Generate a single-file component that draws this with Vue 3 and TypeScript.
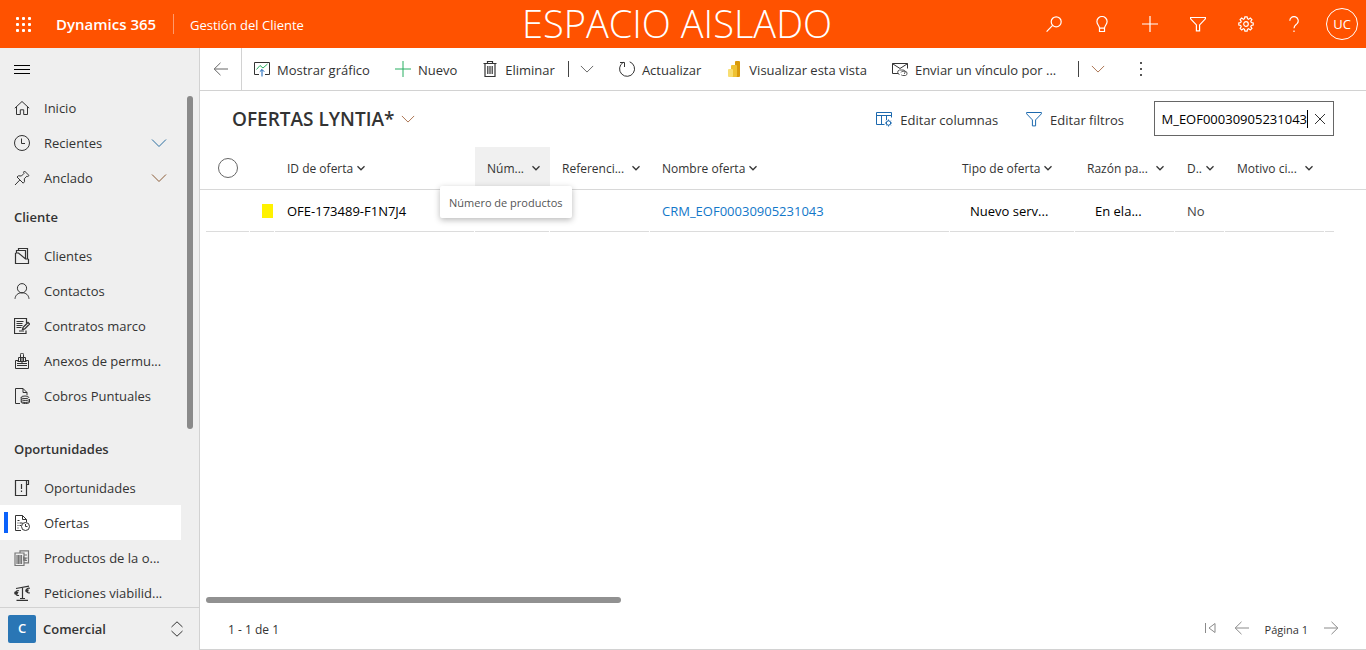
<script setup lang="ts">
import { ref } from 'vue'

interface NavItem {
  label: string
  icon: string
  expandable?: boolean
  active?: boolean
}

interface NavGroup {
  title?: string
  items: NavItem[]
}

interface Column {
  key: string
  label: string
  hovered?: boolean
}

const icons: Record<string, string> = {
  search: '<circle cx="10.2" cy="5.8" r="5"/><path d="M6.6 9.4L.6 15.6"/>',
  bulb: '<path d="M5.5 12.2c0-2.6-2.6-3.4-2.6-6.6a5.1 5.1 0 0 1 10.2 0c0 3.2-2.6 4-2.6 6.6zM5.5 12.2v3.3h5v-3.3"/>',
  plus: '<path d="M8 0v16M0 8h16"/>',
  filter: '<path d="M.6 1.5h14.8v1.3L9.6 8.900v6H6.400v-6L.6 2.800z"/>',
  gear: '<path d="M6.900.8h2.200l.4 1.900 1.100.5 1.700-1.100 1.600 1.600-1.100 1.700.5 1.100 1.900.4v2.200l-1.900.4-.5 1.100 1.100 1.700-1.600 1.600-1.700-1.100-1.100.5-.4 1.900H6.900l-.4-1.900-1.100-.5-1.700 1.100-1.600-1.600 1.100-1.700-.5-1.100-1.900-.4V6.900l1.900-.4.5-1.100-1.100-1.700 1.600-1.600 1.700 1.100 1.100-.5z"/><circle cx="8" cy="8" r="2.300"/>',
  help: '<path d="M3.800 4.700a4.200 4.200 0 1 1 7.300 2.900C9.300 9.200 8 9.900 8 12.300M8 14.500v1.500"/>',
  back: '<path d="M15 8H1.200M7.500 1.800L1.200 8l6.300 6.200"/>',
  forward: '<path d="M1 8h13.800M8.500 1.800L14.800 8l-6.300 6.200"/>',
  first: '<path d="M2.500 3v10M12 3.500v9L6 8z"/>',
  menu: '<path d="M0 4.500h16M0 8.500h16M0 12.500h16"/>',
  chart: '<path d="M5 13.500H.5V1.500h15v12H11"/><path d="M2.500 8.500l3.500-4 3 2.500L13.500 3" stroke="#27ae60"/><path d="M8 15.500V8.500M5.800 10.700L8 8.500l2.200 2.200" stroke="#1160b7"/>',
  trash: '<path d="M1.500 2.500h13M5.500 2.500v-2h5v2M3 2.500v13h10v-13M5.800 5v8M8 5v8M10.200 5v8" stroke-width="1.200"/>',
  refresh: '<path d="M10.700.8a7.500 7.500 0 1 1-6.500.6"/><path d="M1 1.500h4.500V6"/>',
  mail: '<path d="M6.500 12.500H.5v-10h15v5M.5 2.700L8 7.500l7.500-4.800"/><path d="M7.500 13.500a2.300 2.300 0 0 1 0-4.500h3.500a2 2 0 0 1 1 3.800M9 11.500a2.200 2.200 0 0 1 2-1.300h2a2.200 2.200 0 0 1 .5 4.300H10.500a2.200 2.200 0 0 1-1.300-.8" stroke="#555"/>',
  columns: '<path d="M.5 13.500v-12h15v5M.5 4.500h15M.5 13.500h8M5.500 4.500v9M10.500 4.500v4.500"/><circle cx="12.5" cy="12" r="2.200"/><path d="M12.500 8.500v1.300M12.500 14.200v1.300M9 12h1.300M14.700 12H16M10.200 9.700l.8.800M14 13.500l.8.800M14.800 9.700l-.8.800M11 13.500l-.8.800"/>',
  close: '<path d="M3 3l10 10M13 3L3 13"/>',
  home: '<path d="M.8 8.200L8 1.500l7.200 6.700M2.500 6.800v7.700h3.800V9.800h3.400v4.700h3.800V6.800"/>',
  clock: '<circle cx="8" cy="8" r="7.500"/><path d="M7.500 3.500v5H11"/>',
  pin: '<path d="M10.500 1l4.500 4.500-1.200 1-1-.3-2.500 2.600.2 2.900-1.300 1.500L3 7l1.500-1.200 2.900.2L10 3.400l-.4-1.200zM5.800 10L1 15"/>',
  folder: '<path d="M1.500 5V15.500h13V11M1.500 5h3l7 6h3M2.500 5V2.500h9V11M4.500 2.500V.5h9V11" stroke-width="1.200"/>',
  person: '<circle cx="8" cy="5.200" r="4.600"/><path d="M1 15.800c.4-3.800 3-6 7-6s6.600 2.200 7 6"/>',
  contract: '<path d="M12.500 5V.5h-12v15h11.500v-3" stroke-width="1.200"/><path d="M2.500 3.500h7M2.500 5.500h6M2.500 7.500h6M2.500 9.500h5M5 13h5" stroke-width="1.200"/><path d="M8.500 11.500l.6-2.200L14 4.500l1.600 1.500-4.900 4.900z" stroke-width="1.300"/>',
  annex: '<path d="M6.500 9V1.500a1.500 1.500 0 0 1 3 0V9M4.500 9V4.500h7V9M8 4v6M1.500 7.500v8h13v-8h-3M1.500 7.500h3M3 10.500h10M3 12.500h10M3.500 8.500h9" stroke-width="1"/>',
  invoice: '<path d="M6 15.500H1.500V.5h7.500l4 4V7M9 .5v4h4"/><ellipse cx="11" cy="9.300" rx="3.800" ry="1.300"/><path d="M7.200 9.300v4.800c0 .8 1.700 1.400 4.300 1.400s4-.6 4-1.400V11M7.200 11.500c1 1.300 7 1.300 8.300 0M7.200 13.500c1 1.300 7 1.300 8.300 0"/>',
  opportunity: '<path d="M1.500 .5h13v4h-2v11h-11zM12.500 4.500v-4M7.500 4v5M7.500 10.500V12" stroke-width="1.200"/>',
  quote: '<path d="M7 15.500H1.500V.5h7l4 4V7M8.500 .5v4h4M3.500 5.500h2M3.500 8h1M5.500 8h3M3.500 10.500h1M5.500 10.500h1.500M3.500 13h1"/><circle cx="11.500" cy="11.500" r="4"/><path d="M11.500 9v2.500h2"/>',
  products: '<path d="M1 3h9v12.500H1zM3 5v9M4.500 5v9M6 5v9M7.500 5v9M6 3V.8h8.500v12H10M10 5h3M11 8h2.500M10 10.500h3" stroke="#777" stroke-width="1.200"/><path d="M9 6l4 3-4 2z" fill="#777" stroke="none"/>',
  scales: '<path d="M8.500 2.500v11M6 13.500h5M2.500 15.300h11.500M2 3.500l13-2.300M5 5.700a2.500 2.500 0 1 0 0 4.600M.3 7.300h4M.3 8.700h3.500M15.800 3.400a2.400 2.400 0 1 0 0 4.300M11.300 5h3.500M11.300 6.200h3" stroke-width="1.200"/>',
  chevron: '<path d="M1 4.500l7 7 7-7"/>',
  updown: '<path d="M2.500 6L8 .8 13.500 6M2.500 10L8 15.200 13.500 10"/>',
}

const groups: NavGroup[] = [
  {
    items: [
      { label: 'Inicio', icon: 'home' },
      { label: 'Recientes', icon: 'clock', expandable: true },
      { label: 'Anclado', icon: 'pin', expandable: true },
    ],
  },
  {
    title: 'Cliente',
    items: [
      { label: 'Clientes', icon: 'folder' },
      { label: 'Contactos', icon: 'person' },
      { label: 'Contratos marco', icon: 'contract' },
      { label: 'Anexos de permu...', icon: 'annex' },
      { label: 'Cobros Puntuales', icon: 'invoice' },
    ],
  },
  {
    title: 'Oportunidades',
    items: [
      { label: 'Oportunidades', icon: 'opportunity' },
      { label: 'Ofertas', icon: 'quote', active: true },
      { label: 'Productos de la o...', icon: 'products' },
      { label: 'Peticiones viabilid...', icon: 'scales' },
    ],
  },
]

const headerActions = [
  { icon: 'search', label: 'Buscar' },
  { icon: 'bulb', label: 'Asistente' },
  { icon: 'plus', label: 'Crear' },
  { icon: 'filter', label: 'Filtrar' },
  { icon: 'gear', label: 'Configuración' },
  { icon: 'help', label: 'Ayuda' },
]

const columns: Column[] = [
  { key: 'id', label: 'ID de oferta' },
  { key: 'num', label: 'Núm...', hovered: true },
  { key: 'ref', label: 'Referenci...' },
  { key: 'name', label: 'Nombre oferta' },
  { key: 'type', label: 'Tipo de oferta' },
  { key: 'reason', label: 'Razón pa...' },
  { key: 'd', label: 'D..' },
  { key: 'motive', label: 'Motivo ci...' },
]

const query = ref('M_EOF00030905231043')
const allSelected = ref(false)
</script>

<template>
  <div class="app">
    <header class="topbar">
      <button class="waffle" aria-label="Iniciador de aplicaciones">
        <i v-for="n in 9" :key="n"></i>
      </button>
      <a class="brand" href="#">Dynamics 365</a>
      <span class="module">Gestión del Cliente</span>
      <span class="environment">ESPACIO AISLADO</span>
      <nav class="top-actions">
        <button v-for="a in headerActions" :key="a.icon" :aria-label="a.label">
          <svg class="icon" viewBox="0 0 16 16" v-html="icons[a.icon]"></svg>
        </button>
      </nav>
      <button class="avatar" aria-label="Cuenta">UC</button>
    </header>

    <div class="body">
      <aside class="sidebar">
        <button class="hamburger" aria-label="Menú">
          <svg class="icon" viewBox="0 0 16 16" v-html="icons.menu"></svg>
        </button>
        <nav class="site-map">
          <section v-for="(g, gi) in groups" :key="gi" class="group">
            <h2 v-if="g.title">{{ g.title }}</h2>
            <a v-for="item in g.items" :key="item.label" href="#" class="nav-item" :class="{ active: item.active }">
              <svg class="icon" viewBox="0 0 16 16" v-html="icons[item.icon]"></svg>
              <span>{{ item.label }}</span>
              <svg v-if="item.expandable" class="icon expand" viewBox="0 0 16 16" v-html="icons.chevron"></svg>
            </a>
          </section>
        </nav>
        <div class="side-thumb"></div>
        <button class="area">
          <span class="area-badge">C</span>
          <span class="area-name">Comercial</span>
          <svg class="icon" viewBox="0 0 16 16" v-html="icons.updown"></svg>
        </button>
      </aside>

      <main class="content">
        <div class="commands">
          <button class="back" aria-label="Atrás">
            <svg class="icon" viewBox="0 0 16 16" v-html="icons.back"></svg>
          </button>
          <button class="command">
            <svg class="icon" viewBox="0 0 16 16" v-html="icons.chart"></svg>Mostrar gráfico
          </button>
          <button class="command green">
            <svg class="icon" viewBox="0 0 16 16" v-html="icons.plus"></svg>Nuevo
          </button>
          <button class="command">
            <svg class="icon" viewBox="0 0 16 16" v-html="icons.trash"></svg>Eliminar
          </button>
          <button class="split-arrow" aria-label="Más opciones de eliminar">
            <svg class="icon" viewBox="0 0 16 16" v-html="icons.chevron"></svg>
          </button>
          <button class="command">
            <svg class="icon" viewBox="0 0 16 16" v-html="icons.refresh"></svg>Actualizar
          </button>
          <button class="command">
            <svg class="icon" viewBox="0 0 16 16">
              <rect x="9" y="0" width="5" height="16" rx="1" fill="#d99a0b" stroke="none" />
              <rect x="5" y="4" width="6" height="12" rx="1" fill="#efc234" stroke="none" />
              <rect x="2" y="8" width="5" height="8" rx="1" fill="#f8de73" stroke="none" />
            </svg>Visualizar esta vista
          </button>
          <button class="command wide">
            <svg class="icon" viewBox="0 0 16 16" v-html="icons.mail"></svg>Enviar un vínculo por ...
          </button>
          <button class="split-arrow warm" aria-label="Más opciones de envío">
            <svg class="icon" viewBox="0 0 16 16" v-html="icons.chevron"></svg>
          </button>
          <button class="more" aria-label="Más comandos"><i></i><i></i><i></i></button>
        </div>

        <div class="view-bar">
          <button class="view-name">
            <h1>OFERTAS LYNTIA*</h1>
            <svg class="icon" viewBox="0 0 16 16" v-html="icons.chevron"></svg>
          </button>
          <div class="view-tools">
            <button class="tool">
              <svg class="icon" viewBox="0 0 16 16" v-html="icons.columns"></svg>Editar columnas
            </button>
            <button class="tool">
              <svg class="icon" viewBox="0 0 16 16" v-html="icons.filter"></svg>Editar filtros
            </button>
            <div class="search">
              <input v-model="query" type="text" aria-label="Buscar en esta vista" />
              <span class="caret"></span>
              <button aria-label="Borrar búsqueda">
                <svg class="icon" viewBox="0 0 16 16" v-html="icons.close"></svg>
              </button>
            </div>
          </div>
        </div>

        <div class="grid">
          <table>
            <colgroup>
              <col class="w-check" /><col class="w-flag" /><col class="w-id" /><col class="w-num" />
              <col class="w-ref" /><col class="w-name" /><col class="w-type" /><col class="w-ref" />
              <col class="w-d" /><col class="w-ref" /><col />
            </colgroup>
            <thead>
              <tr>
                <th class="check"><input v-model="allSelected" type="checkbox" aria-label="Seleccionar todo" /></th>
                <th></th>
                <th v-for="c in columns" :key="c.key" :class="[c.key, { hovered: c.hovered }]">
                  <button class="col-head">
                    <span>{{ c.label }}</span>
                    <svg class="icon" viewBox="0 0 16 16" v-html="icons.chevron"></svg>
                  </button>
                  <div v-if="c.hovered" class="tooltip" role="tooltip">Número de productos</div>
                </th>
                <th></th>
              </tr>
            </thead>
            <tbody>
              <tr>
                <td class="first"></td>
                <td><span class="flag"></span></td>
                <td>OFE-173489-F1N7J4</td>
                <td></td>
                <td></td>
                <td><a href="#">CRM_EOF00030905231043</a></td>
                <td class="option">Nuevo serv...</td>
                <td class="option">En ela...</td>
                <td class="muted">No</td>
                <td></td>
                <td class="last"></td>
              </tr>
            </tbody>
          </table>
        </div>

        <div class="h-scroll"><div class="h-thumb"></div></div>
        <footer class="pager">
          <span class="count">1 - 1 de 1</span>
          <button aria-label="Primera página"><svg class="icon" viewBox="0 0 16 16" v-html="icons.first"></svg></button>
          <button aria-label="Página anterior"><svg class="icon" viewBox="0 0 16 16" v-html="icons.back"></svg></button>
          <span class="page">Página 1</span>
          <button aria-label="Página siguiente"><svg class="icon" viewBox="0 0 16 16" v-html="icons.forward"></svg></button>
        </footer>
      </main>
    </div>
  </div>
</template>

<style>
body {
  margin: 0;
  overflow: hidden;
}
</style>

<style scoped>
.app {
  height: 100vh;
  display: flex;
  flex-direction: column;
  font-family: 'Open Sans', 'Noto Sans', sans-serif;
  font-size: 13px;
  line-height: 20px;
  color: #333;
  background: #fff;
}
.app *,
.app *::before {
  box-sizing: border-box;
}
button {
  font: inherit;
  color: inherit;
  background: none;
  border: 0;
  padding: 0;
  margin: 0;
  display: flex;
  align-items: center;
  white-space: nowrap;
  flex: none;
}
a {
  color: inherit;
  text-decoration: none;
}
.icon {
  width: 16px;
  height: 16px;
  flex: none;
  fill: none;
  stroke: currentColor;
  stroke-width: 1;
}

/* Top bar */
.topbar {
  height: 48px;
  flex: none;
  display: flex;
  align-items: center;
  position: relative;
  background: #ff5200;
  color: #fff;
}
.waffle {
  display: grid;
  grid-template-columns: repeat(3, 3px);
  gap: 3px;
  margin-left: 16px;
}
.waffle i {
  width: 3px;
  height: 3px;
  background: #fff;
  border-radius: 1px;
}
.brand {
  width: 117px;
  margin-left: 25px;
  font-size: 15px;
  font-weight: 600;
  white-space: nowrap;
}
.module {
  height: 20px;
  line-height: 22px;
  padding-left: 16px;
  border-left: 1px solid #ff9a6b;
}
.environment {
  position: absolute;
  left: 0;
  right: 12px;
  top: 0;
  line-height: 46px;
  text-align: center;
  font-size: 38px;
  font-weight: 300;
  pointer-events: none;
}
.top-actions {
  display: flex;
  gap: 32px;
  margin-left: auto;
  margin-right: 24px;
}
.top-actions .icon {
  stroke-width: 1.2;
}
.avatar {
  width: 32px;
  height: 32px;
  justify-content: center;
  margin-right: 8px;
  border: 1px solid #fff;
  border-radius: 50%;
}

/* Sidebar */
.body {
  flex: 1;
  min-height: 0;
  display: flex;
}
.sidebar {
  width: 200px;
  flex: none;
  display: flex;
  flex-direction: column;
  position: relative;
  background: #efefef;
  border-right: 1px solid #d2d2d2;
}
.hamburger {
  height: 42px;
  padding-left: 14px;
  color: #000;
}
.site-map {
  flex: 1;
  min-height: 0;
  overflow: hidden;
}
.group h2 {
  margin: 0;
  padding-left: 14px;
  font-size: 13px;
  font-weight: 600;
  line-height: 42px;
}
.group:nth-child(2) {
  padding-top: 1px;
}
.group:nth-child(3) {
  padding-top: 15px;
}
.nav-item {
  display: flex;
  align-items: center;
  position: relative;
  width: 181px;
  height: 35px;
  padding: 0 14px;
  gap: 14px;
}
.nav-item.active {
  background: #fff;
}
.nav-item.active::before {
  content: '';
  position: absolute;
  left: 4px;
  top: 7px;
  width: 4px;
  height: 21px;
  background: #0b62fb;
}
.expand {
  margin-left: auto;
  color: #2b6ea0;
}
.nav-item:nth-child(3) .expand {
  color: #8a5a35;
}
.side-thumb {
  position: absolute;
  top: 48px;
  right: 6px;
  width: 6px;
  height: 333px;
  border-radius: 3px;
  background: #8a8a8a;
}
.area {
  height: 43px;
  padding: 0 14px 0 8px;
  border-top: 1px solid #d2d2d2;
}
.area-badge {
  width: 28px;
  height: 28px;
  line-height: 26px;
  border-radius: 2px;
  background: #2a76b5;
  color: #fff;
  font-weight: 600;
}
.area-name {
  flex: 1;
  margin-left: 7px;
  text-align: left;
  font-weight: 600;
}

/* Commands */
.content {
  flex: 1;
  min-width: 0;
  display: flex;
  flex-direction: column;
  border-bottom: 1px solid #d2d2d2;
}
.commands {
  height: 43px;
  flex: none;
  display: flex;
  border-bottom: 1px solid #d2d2d2;
}
.back {
  width: 42px;
  justify-content: center;
  border-right: 1px solid #d2d2d2;
  color: #666;
}
.command {
  padding: 2px 13px 0 12px;
  gap: 7px;
}
.command.wide {
  padding-right: 22px;
}
.command .icon,
.tool .icon {
  margin-bottom: 2px;
}
.green .icon {
  color: #27ae60;
}
.split-arrow {
  width: 39px;
  justify-content: center;
  position: relative;
  color: #555;
}
.split-arrow::before {
  content: '';
  position: absolute;
  left: 0;
  top: 13px;
  width: 1px;
  height: 16px;
  background: #444;
}
.split-arrow .icon,
.view-name .icon {
  width: 14px;
  height: 14px;
}
.warm,
.view-name .icon {
  color: #a0623c;
}
.more {
  flex-direction: column;
  justify-content: center;
  gap: 4px;
  margin-left: 23px;
}
.more i {
  width: 2px;
  height: 2px;
  background: #555;
}

/* View header */
.view-bar {
  flex: none;
  display: flex;
  align-items: center;
  justify-content: space-between;
  height: 56px;
  padding: 0 32px 1px;
}
.view-name {
  gap: 7px;
}
.view-name h1 {
  margin: 0;
  font-size: 19px;
  font-weight: 600;
  line-height: 24px;
}
.view-tools {
  display: flex;
  align-items: center;
  gap: 28px;
}
.tool {
  gap: 8px;
  padding-top: 2px;
}
.tool .icon {
  color: #1c69ae;
}
.search {
  width: 180px;
  height: 35px;
  display: flex;
  align-items: center;
  margin-left: 2px;
  border: 1px solid #666;
}
.search input {
  flex: 1;
  min-width: 0;
  padding: 0;
  border: 0;
  outline: 0;
  background: none;
  font: inherit;
  color: #000;
  text-align: right;
}
.caret {
  width: 1px;
  height: 18px;
  background: #000;
}
.search button {
  margin: 0 5px 0 4px;
}

/* Grid */
.grid {
  flex: 1;
  min-height: 0;
}
table {
  width: 100%;
  table-layout: fixed;
  border-collapse: separate;
  border-spacing: 0;
}
.w-check { width: 50px; }
.w-flag { width: 25px; }
.w-id { width: 200px; }
.w-num { width: 75px; }
.w-ref { width: 100px; }
.w-name { width: 300px; }
.w-type { width: 125px; }
.w-d { width: 50px; }
th {
  height: 43px;
  padding: 0 0 0 12px;
  position: relative;
  border-bottom: 1px solid #d8d8d8;
  font-size: 12px;
  font-weight: 500;
}
th.check {
  padding: 0 0 0 18px;
}
.check input {
  appearance: none;
  display: block;
  width: 20px;
  height: 20px;
  margin: 0;
  border: 1px solid #666;
  border-radius: 50%;
}
.hovered {
  background: #f0f0f0;
}
.col-head {
  gap: 4px;
  padding-top: 2px;
}
.col-head .icon {
  width: 8px;
  height: 8px;
  margin-bottom: 2px;
  stroke-width: 2.5;
}
.num .col-head,
.ref .col-head,
.reason .col-head,
.motive .col-head {
  gap: 8px;
}
.tooltip {
  position: absolute;
  z-index: 1;
  top: 39px;
  left: -35px;
  padding: 7px 9px 5px;
  background: #fff;
  border-radius: 2px;
  box-shadow: 0 2px 6px rgba(0, 0, 0, 0.28);
  font-size: 11px;
  font-weight: 400;
  color: #555;
  white-space: nowrap;
}
td {
  height: 42px;
  padding: 0 0 0 12px;
  color: #000;
  white-space: nowrap;
  background: linear-gradient(#dcdcdc, #dcdcdc) no-repeat left bottom / calc(100% - 1px) 1px;
}
td a {
  color: #1277c9;
}
td.first {
  background-position: right 1px bottom;
  background-size: calc(100% - 7px) 1px;
}
td.last {
  background-size: calc(100% - 32px) 1px;
}
td.option {
  padding-left: 20px;
}
td.muted {
  color: #444;
}
.flag {
  display: block;
  width: 11px;
  height: 14px;
  background: #fff200;
}

/* Footer */
.h-scroll {
  flex: none;
  padding: 0 32px 0 6px;
}
.h-thumb {
  width: 415px;
  height: 6px;
  border-radius: 3px;
  background: #919191;
}
.pager {
  flex: none;
  display: flex;
  align-items: center;
  height: 46px;
  padding: 7px 27px 0 28px;
  gap: 15px;
  font-size: 11px;
}
.count {
  margin-right: auto;
  font-size: 12px;
}
.pager button {
  height: 20px;
  margin-bottom: 4px;
  color: #8a8a8a;
}
</style>
